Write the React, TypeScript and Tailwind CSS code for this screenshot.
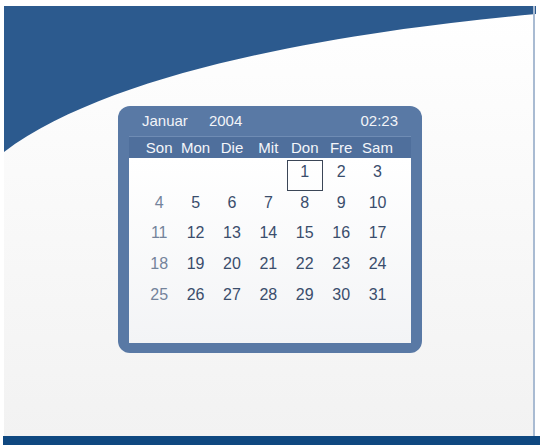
import React from "react";

const weekdays = ["Son", "Mon", "Die", "Mit", "Don", "Fre", "Sam"];

// Januar 2004 starts on a Thursday (Don)
const days: (number | null)[] = [null, null, null, null, ...Array.from({ length: 31 }, (_, i) => i + 1)];

export default function App() {
  const today = 1;

  return (
    <div
      className="relative w-[540px] h-[445px] overflow-hidden bg-white"
      style={{ fontFamily: '"Liberation Sans", Arial, sans-serif' }}
    >
      {/* Background wave */}
      <svg className="absolute inset-0" width="540" height="445" viewBox="0 0 540 445">
        <defs>
          <linearGradient id="body" x1="0" y1="0" x2="0" y2="1">
            <stop offset="0" stopColor="#ffffff" />
            <stop offset="1" stopColor="#f2f2f2" />
          </linearGradient>
        </defs>
        <rect x="4" y="6" width="530" height="432" fill="url(#body)" />
        <path d="M4,6 H536 V14 C380,28 120,64 4,152 Z" fill="#2c5a8e" />
        <rect x="533" y="6" width="2" height="432" fill="#a9bbd2" />
        <rect x="3" y="436" width="537" height="9" fill="#0f4880" />
      </svg>

      {/* Calendar */}
      <div className="relative pl-[118px] pt-[106px]">
        <div className="w-[304px] h-[247px] rounded-[12px] bg-[#5979a5] flex flex-col px-[11px] pb-[10px]">
          <div className="h-[30px] flex items-center text-[15px] text-[#f2f4f8] pl-[13px] pr-[13px]">
            <span>Januar</span>
            <span className="ml-[21px]">2004</span>
            <span className="ml-auto">02:23</span>
          </div>
          <div className="h-[22px] bg-[#4f6f9c] border-t border-[#6f8cb4] flex items-center pl-[12px]">
            <div className="grid grid-cols-[repeat(7,36.4px)] text-[15px] text-[#f4f6fa]">
              {weekdays.map((d) => (
                <div key={d} className="text-center leading-[20px]">
                  {d}
                </div>
              ))}
            </div>
          </div>
          <div className="flex-1 bg-gradient-to-b from-white to-[#f3f4f6] pl-[12px] pt-[2px]">
            <div className="grid grid-cols-[repeat(7,36.4px)] auto-rows-[30.7px] text-[16px]">
              {days.map((d, i) => (
                <div
                  key={i}
                  className={
                    "flex items-center justify-center pb-[7px] " +
                    (i % 7 === 0 ? "text-[#74839b] " : "text-[#3a4d6c] ") +
                    (d === today ? "border-[1.5px] border-[#3b4657]" : "")
                  }
                >
                  {d ?? ""}
                </div>
              ))}
            </div>
          </div>
        </div>
      </div>
    </div>
  );
}
